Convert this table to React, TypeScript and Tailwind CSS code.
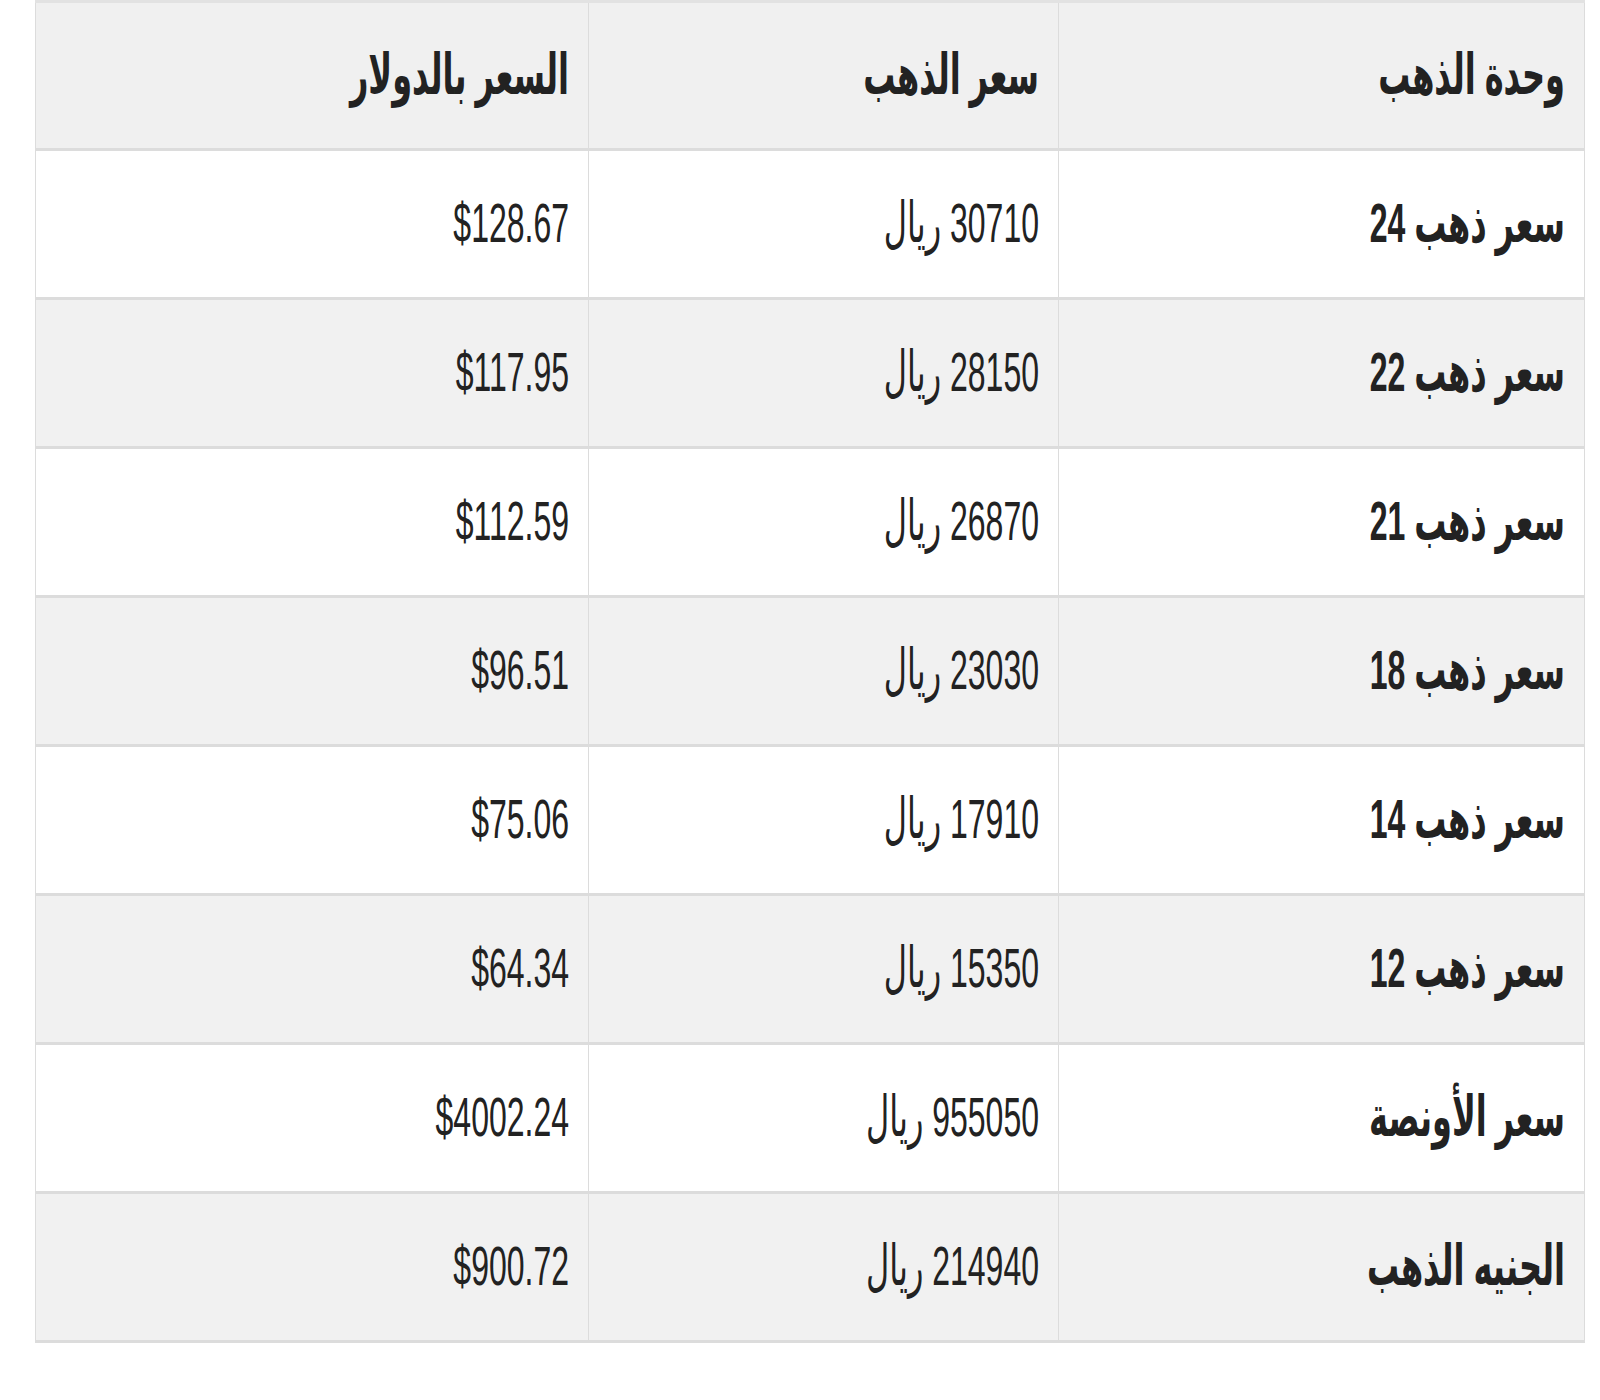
const rows = [
  { unit: "سعر ذهب 24", sar: "30710 ريال", usd: "$128.67" },
  { unit: "سعر ذهب 22", sar: "28150 ريال", usd: "$117.95" },
  { unit: "سعر ذهب 21", sar: "26870 ريال", usd: "$112.59" },
  { unit: "سعر ذهب 18", sar: "23030 ريال", usd: "$96.51" },
  { unit: "سعر ذهب 14", sar: "17910 ريال", usd: "$75.06" },
  { unit: "سعر ذهب 12", sar: "15350 ريال", usd: "$64.34" },
  { unit: "سعر الأونصة", sar: "955050 ريال", usd: "$4002.24" },
  { unit: "الجنيه الذهب", sar: "214940 ريال", usd: "$900.72" },
];

function Txt({ children, bold }: { children: React.ReactNode; bold?: boolean }) {
  return (
    <span
      className={`inline-block origin-center scale-y-[1.75] text-[32px] leading-none text-[#222] ${bold ? "font-bold" : "font-normal"}`}
    >
      {children}
    </span>
  );
}

const cell = "border-x border-b-[3px] border-[#dcdcdc] pr-[19px] text-right align-middle";

export default function App() {
  return (
    <div className="min-h-[1400px] w-[1600px] bg-white font-['Liberation_Sans','DejaVu_Sans',sans-serif]">
      <table dir="rtl" className="ml-[35px] w-[1549px] table-fixed border-collapse border-t-[3px] border-[#e2e2e2]">
        <colgroup>
          <col className="w-[526px]" />
          <col className="w-[470px]" />
          <col className="w-[553px]" />
        </colgroup>
        <thead>
          <tr className="h-[148px] bg-[#f0f0f0]">
            <th className={cell}>
              <Txt bold>وحدة الذهب</Txt>
            </th>
            <th className={cell}>
              <Txt bold>سعر الذهب</Txt>
            </th>
            <th className={cell}>
              <Txt bold>السعر بالدولار</Txt>
            </th>
          </tr>
        </thead>
        <tbody>
          {rows.map((r, i) => (
            <tr key={r.unit} className={`h-[149px] ${i % 2 === 0 ? "bg-white" : "bg-[#f1f1f1]"}`}>
              <td className={cell}>
                <Txt bold>{r.unit}</Txt>
              </td>
              <td className={cell}>
                <Txt>{r.sar}</Txt>
              </td>
              <td className={cell}>
                <Txt>{r.usd}</Txt>
              </td>
            </tr>
          ))}
        </tbody>
      </table>
    </div>
  );
}
